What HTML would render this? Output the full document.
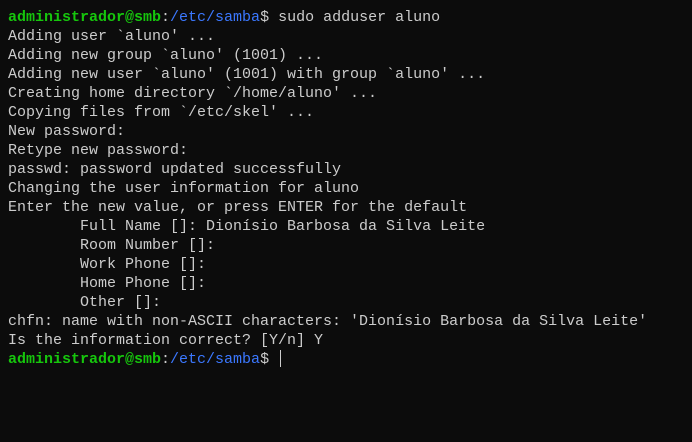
<!DOCTYPE html>
<html><head><style>
html,body{margin:0;padding:0;background:#0c0c0c;width:692px;height:442px;overflow:hidden}
pre{margin:0;padding:8px 0 0 8px;font-family:"Liberation Mono",monospace;font-size:15px;line-height:19px;color:#cccccc;font-weight:normal}
.g{color:#16c60c;font-weight:bold}.b{color:#3b78ff}
.cur{display:inline-block;width:1px;height:17px;background:#cccccc;vertical-align:-4px;margin-left:2px}
</style></head><body><pre><span class="g">administrador@smb</span>:<span class="b">/etc/samba</span>$ sudo adduser aluno
Adding user `aluno' ...
Adding new group `aluno' (1001) ...
Adding new user `aluno' (1001) with group `aluno' ...
Creating home directory `/home/aluno' ...
Copying files from `/etc/skel' ...
New password:
Retype new password:
passwd: password updated successfully
Changing the user information for aluno
Enter the new value, or press ENTER for the default
        Full Name []: Dionísio Barbosa da Silva Leite
        Room Number []:
        Work Phone []:
        Home Phone []:
        Other []:
chfn: name with non-ASCII characters: 'Dionísio Barbosa da Silva Leite'
Is the information correct? [Y/n] Y
<span class="g">administrador@smb</span>:<span class="b">/etc/samba</span>$ <span class="cur"></span></pre></body></html>
